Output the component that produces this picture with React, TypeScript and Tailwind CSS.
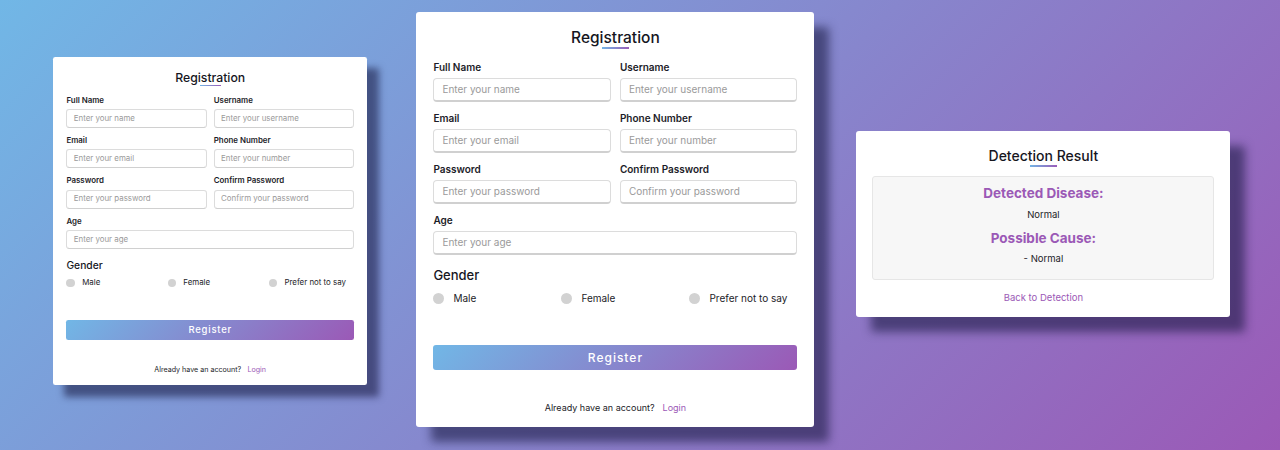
import React from "react";

const font = { fontFamily: "Inter, 'Noto Sans', sans-serif" };

function Field({ label, placeholder }: { label: string; placeholder: string }) {
  return (
    <div className="flex flex-col">
      <div className="text-[10px] leading-[14px] font-semibold text-[#1c1c28]">{label}</div>
      <div className="mt-[4px] h-[24px] rounded-[4px] border border-[#dcdcdc] border-b-2 border-b-[#d0d0d0] bg-white flex items-center px-[8px] text-[10px] text-[#9a9a9a]">
        {placeholder}
      </div>
    </div>
  );
}

function Radio({ label, wide }: { label: string; wide?: boolean }) {
  return (
    <div className={"flex items-center " + (wide ? "w-[128px]" : "")}>
      <span className="w-[11px] h-[11px] rounded-full bg-[#d2d2d2]" />
      <span className="ml-[9px] text-[10px] leading-[14px] text-[#1c1c28]">{label}</span>
    </div>
  );
}

function Registration() {
  return (
    <div className="w-[398px] bg-white rounded-[3px] px-[17px] pt-[15px] pb-[12px] shadow-[15px_15px_10px_rgba(20,20,60,0.55)]" style={font}>
      <div className="text-center text-[15.5px] leading-[22px] font-medium text-[#16161e]">Registration</div>
      <div className="mx-auto w-[27px] h-[2px] mt-[-2px] bg-[linear-gradient(135deg,#71b7e6,#9b59b6)]" />
      <div className="mt-[11px] grid grid-cols-2 gap-x-[9px] gap-y-[9px]">
        <Field label="Full Name" placeholder="Enter your name" />
        <Field label="Username" placeholder="Enter your username" />
        <Field label="Email" placeholder="Enter your email" />
        <Field label="Phone Number" placeholder="Enter your number" />
        <Field label="Password" placeholder="Enter your password" />
        <Field label="Confirm Password" placeholder="Confirm your password" />
        <div className="col-span-2">
          <Field label="Age" placeholder="Enter your age" />
        </div>
      </div>
      <div className="mt-[11px] text-[13px] leading-[18px] font-medium text-[#16161e]">Gender</div>
      <div className="mt-[7px] flex">
        <Radio label="Male" wide />
        <Radio label="Female" wide />
        <Radio label="Prefer not to say" />
      </div>
      <div className="mt-[40px] h-[25px] rounded-[3px] bg-[linear-gradient(135deg,#71b7e6,#9b59b6)] flex items-center justify-center text-white text-[12px] font-medium tracking-[1px]">
        Register
      </div>
      <div className="mt-[31px] flex justify-center items-center text-[9px] leading-[14px] text-[#1c1c28]">
        <span>Already have an account?</span>
        <span className="ml-[8px] text-[#9b59b6]">Login</span>
      </div>
    </div>
  );
}

function Result() {
  return (
    <div className="w-[374px] bg-white rounded-[3px] px-[16px] pt-[15px] pb-[12px] shadow-[15px_15px_10px_rgba(20,20,60,0.55)]" style={font}>
      <div className="text-center text-[14px] leading-[20px] font-medium text-[#16161e]">Detection Result</div>
      <div className="mx-auto w-[27px] h-[2px] mt-[-1px] bg-[linear-gradient(135deg,#71b7e6,#9b59b6)]" />
      <div className="mt-[9px] bg-[#f7f7f7] border border-[#e6e6e6] rounded-[3px] pt-[7px] pb-[13px] flex flex-col items-center">
        <div className="text-[13.5px] leading-[18px] font-bold text-[#9b59b6]">Detected Disease:</div>
        <div className="mt-[6px] text-[9.5px] leading-[14px] text-[#1c1c28]">Normal</div>
        <div className="mt-[7px] text-[13.5px] leading-[18px] font-bold text-[#9b59b6]">Possible Cause:</div>
        <div className="mt-[5px] text-[9.5px] leading-[14px] text-[#1c1c28]">- Normal</div>
      </div>
      <div className="mt-[11px] text-center text-[9.5px] leading-[14px] text-[#9b59b6]">Back to Detection</div>
    </div>
  );
}

export default function App() {
  return (
    <div className="w-[1280px] h-[450px] overflow-hidden bg-[linear-gradient(135deg,#71b7e6,#9b59b6)] flex items-start pl-[53px]">
      <div className="mt-[57px]">
        <div className="[zoom:0.79]">
          <Registration />
        </div>
      </div>
      <div className="mt-[12px] ml-[49px]">
        <Registration />
      </div>
      <div className="mt-[131px] ml-[42px]">
        <Result />
      </div>
    </div>
  );
}
